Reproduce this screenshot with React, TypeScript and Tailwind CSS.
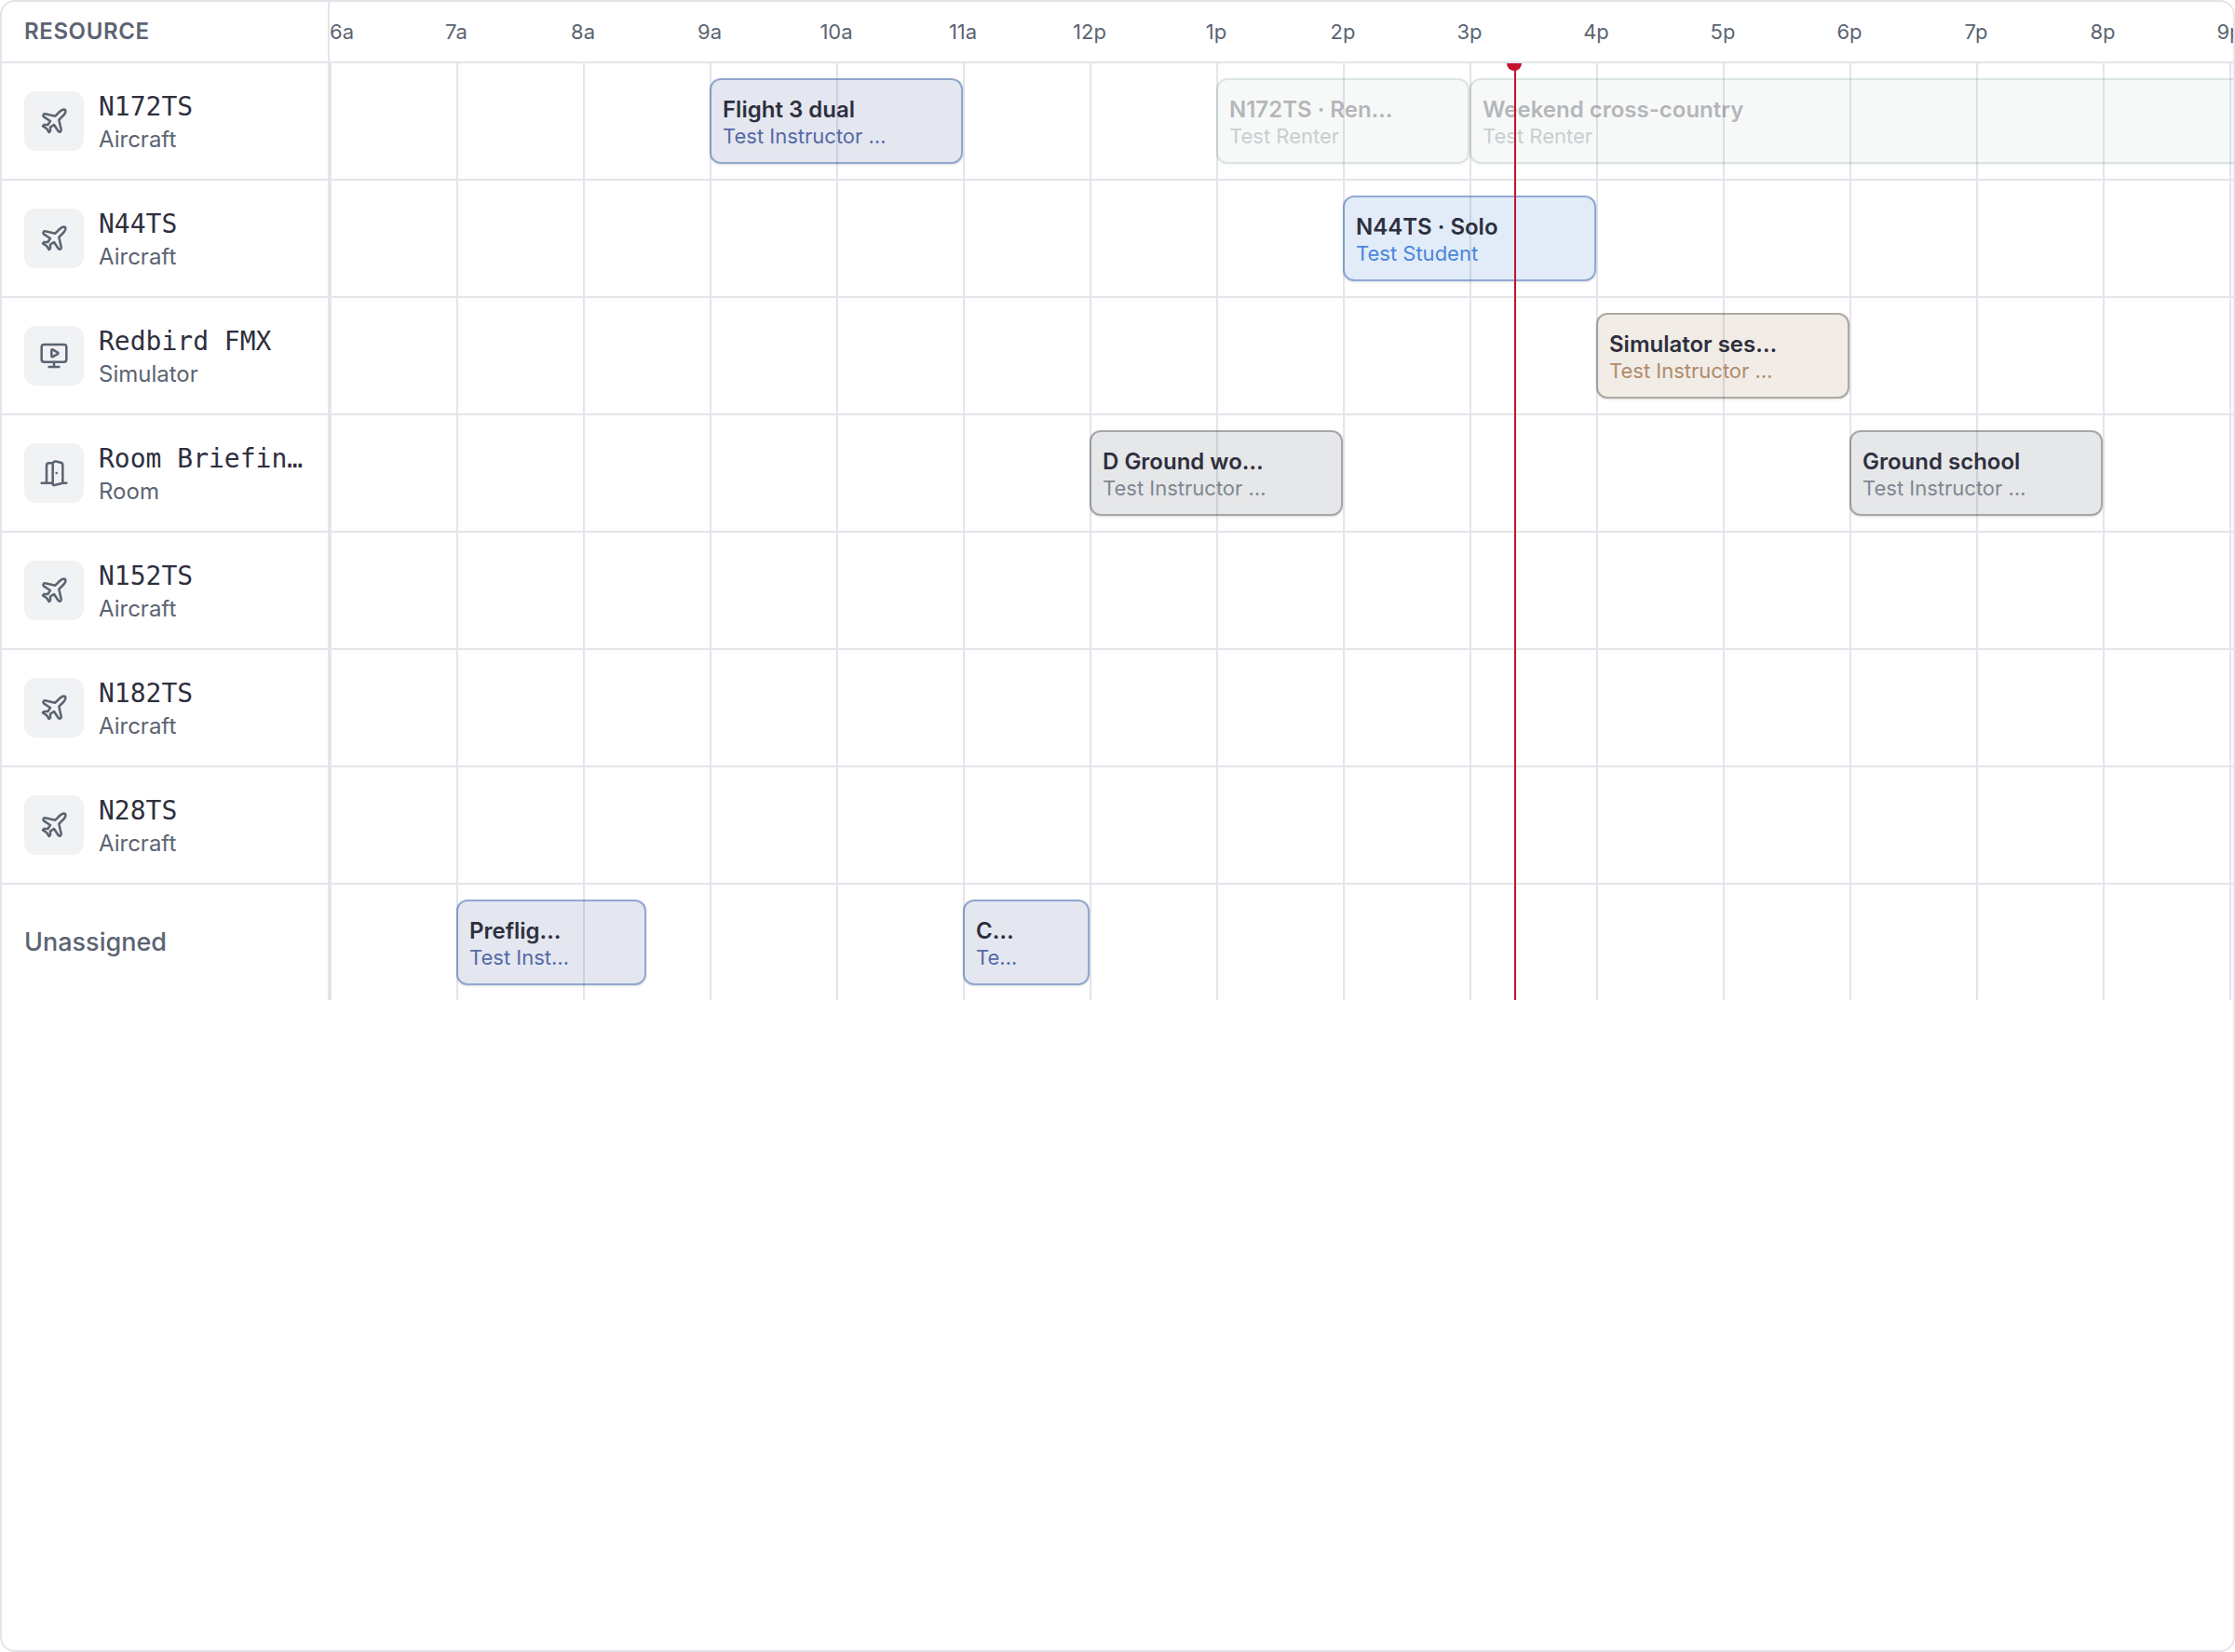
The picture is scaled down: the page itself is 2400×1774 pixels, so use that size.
import { DoorOpen, MonitorPlay, Plane } from "lucide-react";
import type { LucideIcon } from "lucide-react";

const HOUR = 136;
const START = 6;
const NOW = 15.353;

const HOURS = ["6a", "7a", "8a", "9a", "10a", "11a", "12p", "1p", "2p", "3p", "4p", "5p", "6p", "7p", "8p", "9p"];

type Tone = "dual" | "solo" | "sim" | "ground" | "rental";

type Booking = {
  title: string;
  who: string;
  from: number;
  to: number;
  tone: Tone;
};

type Resource = {
  name: string;
  kind?: "Aircraft" | "Simulator" | "Room";
  bookings: Booking[];
};

const ICONS: Record<string, LucideIcon> = {
  Aircraft: Plane,
  Simulator: MonitorPlay,
  Room: DoorOpen,
};

const BOX: Record<Tone, string> = {
  dual: "bg-[#435596]/14 border-[#3f68b0]/50",
  solo: "bg-[#2e78d0]/14 border-[#3f68b0]/50",
  sim: "bg-[#937040]/13 border-[#6b6460]/50",
  ground: "bg-[#4b5560]/14 border-[#55585f]/45",
  rental: "bg-[#3f7158]/12 border-[#3f7158]/45 opacity-35",
};

const WHO: Record<Tone, string> = {
  dual: "text-[#566aa6]",
  solo: "text-[#4a86dc]",
  sim: "text-[#b08b6c]",
  ground: "text-[#808791]",
  rental: "text-[#657681]",
};

const RESOURCES: Resource[] = [
  {
    name: "N172TS",
    kind: "Aircraft",
    bookings: [
      { title: "Flight 3 dual", who: "Test Instructor …", from: 9, to: 11, tone: "dual" },
      { title: "N172TS · Ren…", who: "Test Renter", from: 13, to: 15, tone: "rental" },
      { title: "Weekend cross-country", who: "Test Renter", from: 15, to: 24, tone: "rental" },
    ],
  },
  {
    name: "N44TS",
    kind: "Aircraft",
    bookings: [{ title: "N44TS · Solo", who: "Test Student", from: 14, to: 16, tone: "solo" }],
  },
  {
    name: "Redbird FMX",
    kind: "Simulator",
    bookings: [{ title: "Simulator ses…", who: "Test Instructor …", from: 16, to: 18, tone: "sim" }],
  },
  {
    name: "Room Briefin…",
    kind: "Room",
    bookings: [
      { title: "D Ground wo…", who: "Test Instructor …", from: 12, to: 14, tone: "ground" },
      { title: "Ground school", who: "Test Instructor …", from: 18, to: 20, tone: "ground" },
    ],
  },
  { name: "N152TS", kind: "Aircraft", bookings: [] },
  { name: "N182TS", kind: "Aircraft", bookings: [] },
  { name: "N28TS", kind: "Aircraft", bookings: [] },
  {
    name: "Unassigned",
    bookings: [
      { title: "Preflig…", who: "Test Inst…", from: 7, to: 8.5, tone: "dual" },
      { title: "C…", who: "Te…", from: 11, to: 12, tone: "dual" },
    ],
  },
];

function BookingCard({ b }: { b: Booking }) {
  return (
    <button
      type="button"
      className={`absolute top-4 h-[92px] px-3 pt-1 rounded-xl border-2 shadow-sm text-left whitespace-nowrap overflow-hidden flex flex-col justify-center ${BOX[b.tone]}`}
      style={{ left: (b.from - START) * HOUR, width: (b.to - b.from) * HOUR }}
    >
      <span className="text-2xl leading-7 font-semibold text-[#2e2f3e]">{b.title}</span>
      <span className={`text-[22px] leading-7 ${WHO[b.tone]}`}>{b.who}</span>
    </button>
  );
}

function ResourceCell({ r }: { r: Resource }) {
  if (!r.kind) {
    return <span className="text-[27px] font-medium text-[#5b6472]">{r.name}</span>;
  }
  const Icon = ICONS[r.kind];
  return (
    <>
      <span className="size-16 shrink-0 rounded-xl bg-[#f1f2f4] text-[#5b6472] flex items-center justify-center">
        <Icon size={32} strokeWidth={1.9} aria-hidden="true" />
      </span>
      <div className="min-w-0 pt-1.5 whitespace-nowrap">
        <div className="font-['DejaVu_Sans_Mono',monospace] text-[28px] leading-[34px] text-[#2e2f3e]">{r.name}</div>
        <div className="text-2xl leading-9 text-[#5b6472]">{r.kind}</div>
      </div>
    </>
  );
}

function Row({ r }: { r: Resource }) {
  return (
    <div className="flex border-b-2 border-[#e4e4eb] last:border-b-0">
      <div className="w-[352px] h-31 shrink-0 pl-6 flex items-center gap-4 border-r-2 border-[#e4e4eb]">
        <ResourceCell r={r} />
      </div>
      <div className="relative flex-1 min-w-0 flex overflow-hidden">
        {HOURS.map((h) => (
          <div key={h} className="w-[136px] shrink-0 border-l-2 border-[#e4e4eb]" />
        ))}
        {r.bookings.map((b) => (
          <BookingCard key={b.title} b={b} />
        ))}
      </div>
    </div>
  );
}

export default function App() {
  return (
    <main className="min-h-screen bg-white border-2 border-[#e4e4eb] rounded-2xl overflow-hidden font-[Inter,sans-serif]">
      <header className="flex border-b-2 border-[#e4e4eb]">
        <div className="w-[352px] h-16 shrink-0 pl-6 flex items-center border-r-2 border-[#e4e4eb]">
          <h2 className="text-2xl font-semibold tracking-wide text-[#5b6472]">RESOURCE</h2>
        </div>
        <div className="flex-1 min-w-0 flex items-center overflow-hidden text-[22px] text-[#5b6472]">
          {/* labels are centred on their hour line, the first one sits against the edge */}
          {HOURS.map((h, i) => (
            <span key={h} className={i === 0 ? "w-[68px] shrink-0" : "w-[136px] shrink-0 text-center"}>
              {h}
            </span>
          ))}
        </div>
      </header>

      <section className="relative overflow-hidden" aria-label="Bookings">
        <div>
          {RESOURCES.map((r) => (
            <Row key={r.name} r={r} />
          ))}
        </div>
        {/* Current time */}
        <div className="absolute inset-y-0 left-[352px] w-0 pointer-events-none" aria-hidden="true">
          <div className="absolute inset-y-0 w-[2px] bg-[#c4122f]" style={{ left: (NOW - START) * HOUR }}>
            <div className="absolute -top-2 -left-2 size-4 rounded-full bg-[#c4122f]" />
          </div>
        </div>
      </section>
    </main>
  );
}
